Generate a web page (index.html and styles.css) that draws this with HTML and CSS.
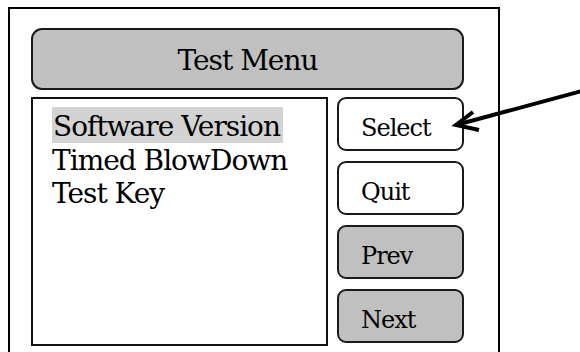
FILE: index.html
```html
<!DOCTYPE html>
<html lang="en">
<head>
  <meta charset="UTF-8" />
  <meta name="viewport" content="width=device-width, initial-scale=1.0" />
  <title>Test Menu</title>
  <link rel="stylesheet" href="styles.css">
</head>
<body>
<div class="screen">
  <div class="title-bar">Test Menu</div>
  <div class="main">
    <ul class="menu-list">
      <li><span class="selected">Software Version</span></li>
      <li>Timed BlowDown</li>
      <li>Test Key</li>
    </ul>
    <div class="buttons">
      <div class="btn">Select</div>
      <div class="btn">Quit</div>
      <div class="btn grey">Prev</div>
      <div class="btn grey">Next</div>
    </div>
  </div>
</div>

<!-- pointer to the Select key -->
<svg class="arrow" width="130" height="50" viewBox="0 0 130 50">
  <line x1="6" y1="41" x2="132" y2="7" stroke="#000" stroke-width="4" />
  <polyline points="23,28 6,41 29,46" fill="none" stroke="#000" stroke-width="4" stroke-linejoin="miter" />
</svg>
</body>
</html>
```

FILE: styles.css
```css
body {
  margin: 0;
  padding: 0;
  background: #fff;
  color: #000;
  font-family: 'DejaVu Serif', 'Liberation Serif', serif;
  overflow: hidden;
}
.screen {
  margin: 7px 0 0 8px;
  width: 492px;
  height: 400px;
  border: 2px solid #000;
  padding: 19px 0 0 21px;
  box-sizing: border-box;
}
.title-bar {
  width: 433px;
  height: 62px;
  box-sizing: border-box;
  background: #c0c0c0;
  border: 2px solid #1a1a1a;
  border-radius: 11px;
  font-size: 28px;
  letter-spacing: -1px;
  text-align: center;
  line-height: 62px;
}
.main {
  display: flex;
  gap: 9px;
  margin-top: 7px;
}
.menu-list {
  list-style: none;
  margin: 0;
  width: 297px;
  height: 249px;
  box-sizing: border-box;
  border: 2px solid #111;
  padding: 8px 0 0 19px;
  font-size: 28px;
  letter-spacing: -1px;
}
.menu-list li {
  height: 33px;
  line-height: 42px;
}
.selected {
  display: inline-block;
  background: #d3d3d3;
  padding: 0 3px 0 1px;
  height: 36px;
  line-height: 40px;
  vertical-align: top;
}
.buttons {
  display: flex;
  flex-direction: column;
  gap: 10px;
}
.btn {
  width: 127px;
  height: 54px;
  box-sizing: border-box;
  border: 2px solid #1a1a1a;
  border-radius: 9px;
  background: #fff;
  padding: 5px 0 0 22px;
  font-size: 24px;
  letter-spacing: -1px;
  line-height: 48px;
}
.btn.grey {
  background: #c0c0c0;
}
.arrow {
  position: absolute;
  left: 450px;
  top: 84px;
}
```
